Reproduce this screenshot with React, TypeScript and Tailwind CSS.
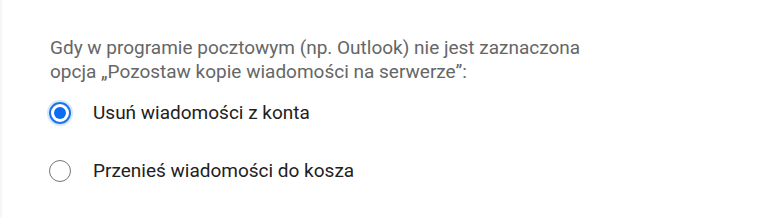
import React from "react";

function Radio({ checked }: { checked: boolean }) {
  if (checked) {
    return (
      <div className="w-[22px] h-[22px] rounded-full border-2 border-[#1a73e8] shadow-[0_0_0_2px_rgba(26,115,232,0.18)] flex items-center justify-center shrink-0">
        <div className="w-[12px] h-[12px] rounded-full bg-[#0b6cf2]" />
      </div>
    );
  }
  return <div className="w-[22px] h-[22px] rounded-full border-[1.5px] border-[#767676] shrink-0" />;
}

export default function App() {
  const font = { fontFamily: "Roboto, 'Noto Sans', sans-serif" };
  return (
    <div className="w-[772px] h-[218px] bg-white border-l-2 border-[#f6f6f6]" style={font}>
      <div className="pl-[47px] pt-[36px]">
        <p className="pl-px text-[19px] leading-[24px] text-[#666666]">
          Gdy w programie pocztowym (np. Outlook) nie jest zaznaczona
          <br />
          opcja „Pozostaw kopie wiadomości na serwerze”:
        </p>
        <div className="mt-[18px] flex flex-col gap-[36px]">
          <label className="flex items-center gap-[22px] h-[22px]">
            <Radio checked />
            <span className="text-[19px] text-[#212121]">Usuń wiadomości z konta</span>
          </label>
          <label className="flex items-center gap-[22px] h-[22px]">
            <Radio checked={false} />
            <span className="text-[19px] text-[#212121]">Przenieś wiadomości do kosza</span>
          </label>
        </div>
      </div>
    </div>
  );
}
